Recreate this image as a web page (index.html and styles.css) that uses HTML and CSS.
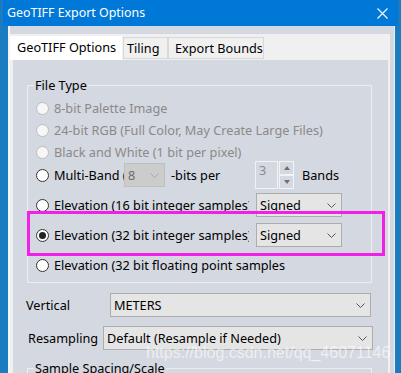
FILE: index.html
```html
<!DOCTYPE html>
<html lang="en">
<head>
    <meta charset="UTF-8">
    <meta name="viewport" content="width=device-width, initial-scale=1.0">
    <title>GeoTIFF Export Options</title>
    <link rel="stylesheet" href="styles.css">
</head>
<body>

    <div class="window">
        <div class="titlebar">
            <span class="title">GeoTIFF Export Options</span>
            <svg class="close" width="11" height="11" viewBox="0 0 11 11">
                <path d="M0.5 0.5L10.5 10.5M10.5 0.5L0.5 10.5" stroke="#fff" stroke-width="1.1" fill="none"/>
            </svg>
        </div>

        <div class="client">
            <div class="tabs">
                <div class="tab-strip">
                    <div class="tab active">GeoTIFF Options</div>
                    <div class="tab tab-tiling">Tiling</div>
                    <div class="tab tab-bounds">Export Bounds</div>
                </div>

                <div class="tab-page">
                    <!-- File Type group -->
                    <fieldset class="group">
                        <legend>File Type</legend>

                        <div class="radio-row">
                            <span class="radio disabled"></span>
                            <span class="text-disabled">8-bit Palette Image</span>
                        </div>
                        <div class="radio-row">
                            <span class="radio disabled"></span>
                            <span class="text-disabled">24-bit RGB (Full Color, May Create Large Files)</span>
                        </div>
                        <div class="radio-row">
                            <span class="radio disabled"></span>
                            <span class="text-disabled">Black and White (1 bit per pixel)</span>
                        </div>
                        <div class="radio-row tall">
                            <span class="radio"></span>
                            <span class="clip band-label">Multi-Band (</span>
                            <div class="combo combo-disabled combo-bits">
                                <span>8</span>
                                <svg class="chevron" width="9" height="5" viewBox="0 0 9 5"><path d="M0.5 0.5L4.5 4.5L8.5 0.5" stroke="#a8a8a8" fill="none"/></svg>
                            </div>
                            <span class="bits-label">-bits per</span>
                            <div class="spin">
                                <div class="spin-box">3</div>
                                <div class="spin-btns">
                                    <div class="spin-btn"><span class="arrow-up"></span></div>
                                    <div class="spin-btn"><span class="arrow-down"></span></div>
                                </div>
                            </div>
                            <span class="bands-label">Bands</span>
                        </div>
                        <div class="radio-row spaced">
                            <span class="radio"></span>
                            <span class="clip elev-label">Elevation (16 bit integer samples)</span>
                            <div class="combo combo-sign">
                                <span>Signed</span>
                                <svg class="chevron" width="9" height="5" viewBox="0 0 9 5"><path d="M0.5 0.5L4.5 4.5L8.5 0.5" stroke="#555" fill="none"/></svg>
                            </div>
                        </div>
                        <div class="radio-row spaced">
                            <span class="radio checked"></span>
                            <span class="clip elev-label">Elevation (32 bit integer samples)</span>
                            <div class="combo combo-sign">
                                <span>Signed</span>
                                <svg class="chevron" width="9" height="5" viewBox="0 0 9 5"><path d="M0.5 0.5L4.5 4.5L8.5 0.5" stroke="#555" fill="none"/></svg>
                            </div>
                        </div>
                        <div class="radio-row spaced">
                            <span class="radio"></span>
                            <span>Elevation (32 bit floating point samples</span>
                        </div>
                    </fieldset>

                    <!-- Vertical / Resampling -->
                    <div class="field-row vertical-row">
                        <span class="field-label vertical-label">Vertical</span>
                        <div class="combo combo-vertical">
                            <span>METERS</span>
                            <svg class="chevron" width="9" height="5" viewBox="0 0 9 5"><path d="M0.5 0.5L4.5 4.5L8.5 0.5" stroke="#555" fill="none"/></svg>
                        </div>
                    </div>
                    <div class="field-row resample-row">
                        <span class="field-label resample-label">Resampling</span>
                        <div class="combo combo-resample">
                            <span>Default (Resample if Needed)</span>
                            <svg class="chevron" width="9" height="5" viewBox="0 0 9 5"><path d="M0.5 0.5L4.5 4.5L8.5 0.5" stroke="#555" fill="none"/></svg>
                        </div>
                    </div>

                    <fieldset class="group spacing-group">
                        <legend>Sample Spacing/Scale</legend>
                    </fieldset>
                </div>
            </div>
        </div>
    </div>

    <!-- annotation drawn over the dialog -->
    <div class="highlight"></div>
    <div class="watermark">https://blog.csdn.net/qq_46071146</div>

</body>
</html>
```

FILE: styles.css
```css
body {
    margin: 0;
    padding: 0;
    width: 401px;
    height: 373px;
    overflow: hidden;
    position: relative;
    font-family: "Noto Sans", "Liberation Sans", Arial, sans-serif;
    font-size: 12.7px;
    color: #000;
    background-color: #1b7cc0;
}

.window {
    height: 373px;
    display: flex;
    flex-direction: column;
}

.titlebar {
    margin-left: 3px;
    width: 395px;
    height: 26px;
    flex-shrink: 0;
    background-color: #0078d7;
    color: #fff;
    display: flex;
    align-items: center;
    justify-content: space-between;
    padding: 0 10px 0 4px;
    box-sizing: border-box;
}

.title {
    font-size: 12.4px;
    line-height: 18px;
}

.close {
    display: block;
}

.client {
    margin-left: 8px;
    width: 387px;
    flex: 1;
    box-sizing: border-box;
    border-left: 2px solid #f3f4f6;
    border-right: 1px solid #eceef1;
    background-color: #d4d8e0;
    padding-top: 8px;
    overflow: hidden;
}

.tabs {
    width: 380px;
    height: 100%;
    box-sizing: border-box;
    background-color: #f0f0f0;
    padding: 0 2px 0 3px;
    display: flex;
    flex-direction: column;
}

.tab-strip {
    height: 26px;
    flex-shrink: 0;
    margin-left: -3px;
    padding-top: 2px;
    box-sizing: border-box;
    display: flex;
    align-items: flex-start;
}

.tab {
    height: 22px;
    margin-top: 1px;
    box-sizing: border-box;
    border: 1px solid #d9d9d9;
    background-color: #f0f0f0;
    line-height: 19px;
    padding-top: 1px;
    white-space: nowrap;
}

.tab.active {
    width: 112px;
    height: 24px;
    margin-top: 0;
    border: none;
    background-color: #fff;
    padding: 0 0 0 7px;
    line-height: 22px;
}

.tab-tiling {
    width: 45px;
    margin-left: 1px;
    padding-left: 3px;
}

.tab-bounds {
    width: 96px;
    padding-left: 6px;
}

.tab-page {
    flex: 1;
    background-color: #d4d8e0;
    padding: 17px 0 0 13px;
}

.group {
    margin: 0 0 0 1px;
    width: 345px;
    box-sizing: border-box;
    border: 1px solid #eceef2;
    padding: 4px 0 5px 8px;
}

.group legend {
    line-height: 16px;
    padding: 0 1px;
    margin-left: -2px;
}

.radio-row {
    display: flex;
    align-items: center;
    height: 22px;
    white-space: nowrap;
}

.radio-row.tall {
    height: 24px;
}

.radio-row.spaced {
    height: 24px;
    margin-top: 6px;
}

.radio {
    width: 13px;
    height: 13px;
    flex-shrink: 0;
    box-sizing: border-box;
    border: 1px solid #333;
    border-radius: 50%;
    background-color: #fff;
    margin-right: 5px;
    display: flex;
    align-items: center;
    justify-content: center;
}

.radio.disabled {
    border-color: #bdbdbd;
    background-color: #f7f7f7;
}

.radio.checked::after {
    content: "";
    width: 7px;
    height: 7px;
    border-radius: 50%;
    background-color: #222;
}

.text-disabled {
    color: #8a8a8a;
}

.clip {
    overflow: hidden;
    white-space: nowrap;
    flex-shrink: 0;
}

.band-label {
    width: 70px;
}

.elev-label {
    width: 195px;
}

.combo {
    height: 24px;
    box-sizing: border-box;
    border: 1px solid #adadad;
    background-color: #e5e5e5;
    display: flex;
    align-items: center;
    justify-content: space-between;
    padding: 0 5px 0 3px;
    flex-shrink: 0;
    white-space: nowrap;
}

.chevron {
    display: block;
}

.combo-disabled {
    background-color: #cccccc;
    border-color: #bfbfbf;
    color: #6d6d6d;
}

.combo-bits {
    width: 41px;
}

.bits-label {
    width: 84px;
    margin-left: 6px;
    flex-shrink: 0;
}

.spin {
    display: flex;
    height: 28px;
    flex-shrink: 0;
}

.spin-box {
    width: 23px;
    box-sizing: border-box;
    border: 1px solid #f2f3f5;
    color: #8a8a8a;
    padding: 1px 0 0 3px;
    line-height: 14px;
}

.spin-btns {
    width: 15px;
    margin-left: 1px;
    display: flex;
    flex-direction: column;
}

.spin-btn {
    flex: 1;
    box-sizing: border-box;
    border: 1px solid #f2f3f5;
    display: flex;
    align-items: center;
    justify-content: center;
}

.arrow-up {
    border-left: 3px solid transparent;
    border-right: 3px solid transparent;
    border-bottom: 4px solid #707070;
}

.arrow-down {
    border-left: 3px solid transparent;
    border-right: 3px solid transparent;
    border-top: 4px solid #707070;
}

.bands-label {
    margin-left: 8px;
}

.combo-sign {
    width: 86px;
    margin-left: 7px;
}

.field-row {
    display: flex;
    align-items: center;
    height: 24px;
}

.vertical-row {
    margin-top: 10px;
}

.resample-row {
    margin-top: 9px;
}

.field-label {
    flex-shrink: 0;
}

.vertical-label {
    width: 84px;
}

.resample-label {
    width: 75px;
    margin-left: 2px;
}

.combo-vertical {
    width: 261px;
}

.combo-resample {
    width: 270px;
}

.spacing-group {
    margin-top: 10px;
    height: 40px;
}

.highlight {
    position: absolute;
    left: 27px;
    top: 211px;
    width: 358px;
    height: 45px;
    box-sizing: border-box;
    border: 3px solid #f020e6;
}

.watermark {
    position: absolute;
    left: 146px;
    top: 344px;
    font-family: "Liberation Sans", Arial, sans-serif;
    font-size: 16px;
    line-height: 18px;
    color: rgba(255, 255, 255, 0.6);
    white-space: nowrap;
}
```
